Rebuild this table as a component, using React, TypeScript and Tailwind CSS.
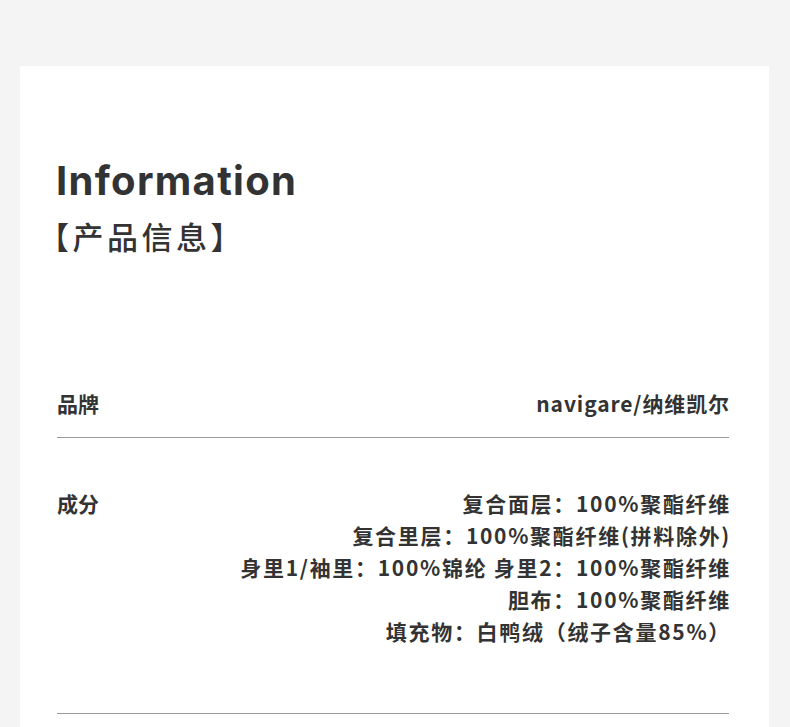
const CJK = '"Noto Sans CJK SC", "Noto Sans", sans-serif';

const COMPOSITION = [
  "复合面层：100%聚酯纤维",
  "复合里层：100%聚酯纤维(拼料除外)",
  "身里1/袖里：100%锦纶 身里2：100%聚酯纤维",
  "胆布：100%聚酯纤维",
  "填充物：白鸭绒（绒子含量85%）",
];

export default function App() {
  return (
    <div className="min-h-[727px] bg-[#f4f4f4] pt-[66px] pl-[20px] pr-[21px]">
      <div className="bg-white pl-[37px] pr-[40px] pt-[91px] text-[#333]" style={{ fontFamily: CJK }}>
        <h1
          className="ml-[-1px] text-[40px] leading-[48px] font-bold tracking-[1.3px]"
          style={{ fontFamily: 'Inter, "Noto Sans", sans-serif' }}
        >
          Information
        </h1>
        <h2 className="mt-[11px] ml-[-19px] text-[31px] leading-[40px] font-medium tracking-[3.5px]">【产品信息】</h2>

        <div className="mt-[131px] flex items-center justify-between pb-[18px] text-[21px] leading-[32px] font-bold">
          <span>品牌</span>
          <span className="mr-[-1px] tracking-[0.9px]">navigare/纳维凯尔</span>
        </div>
        <div className="h-px bg-[#9a9a9a]" />

        <div className="mt-[49px] flex justify-between pb-[66px] text-[21px] leading-[32px] font-bold">
          <span>成分</span>
          <div className="mr-[-2px] flex flex-col items-end tracking-[1.7px]">
            {COMPOSITION.map((line) => (
              <span key={line}>{line}</span>
            ))}
          </div>
        </div>
        <div className="h-px bg-[#9a9a9a]" />
        <div className="h-[20px]" />
      </div>
    </div>
  );
}
